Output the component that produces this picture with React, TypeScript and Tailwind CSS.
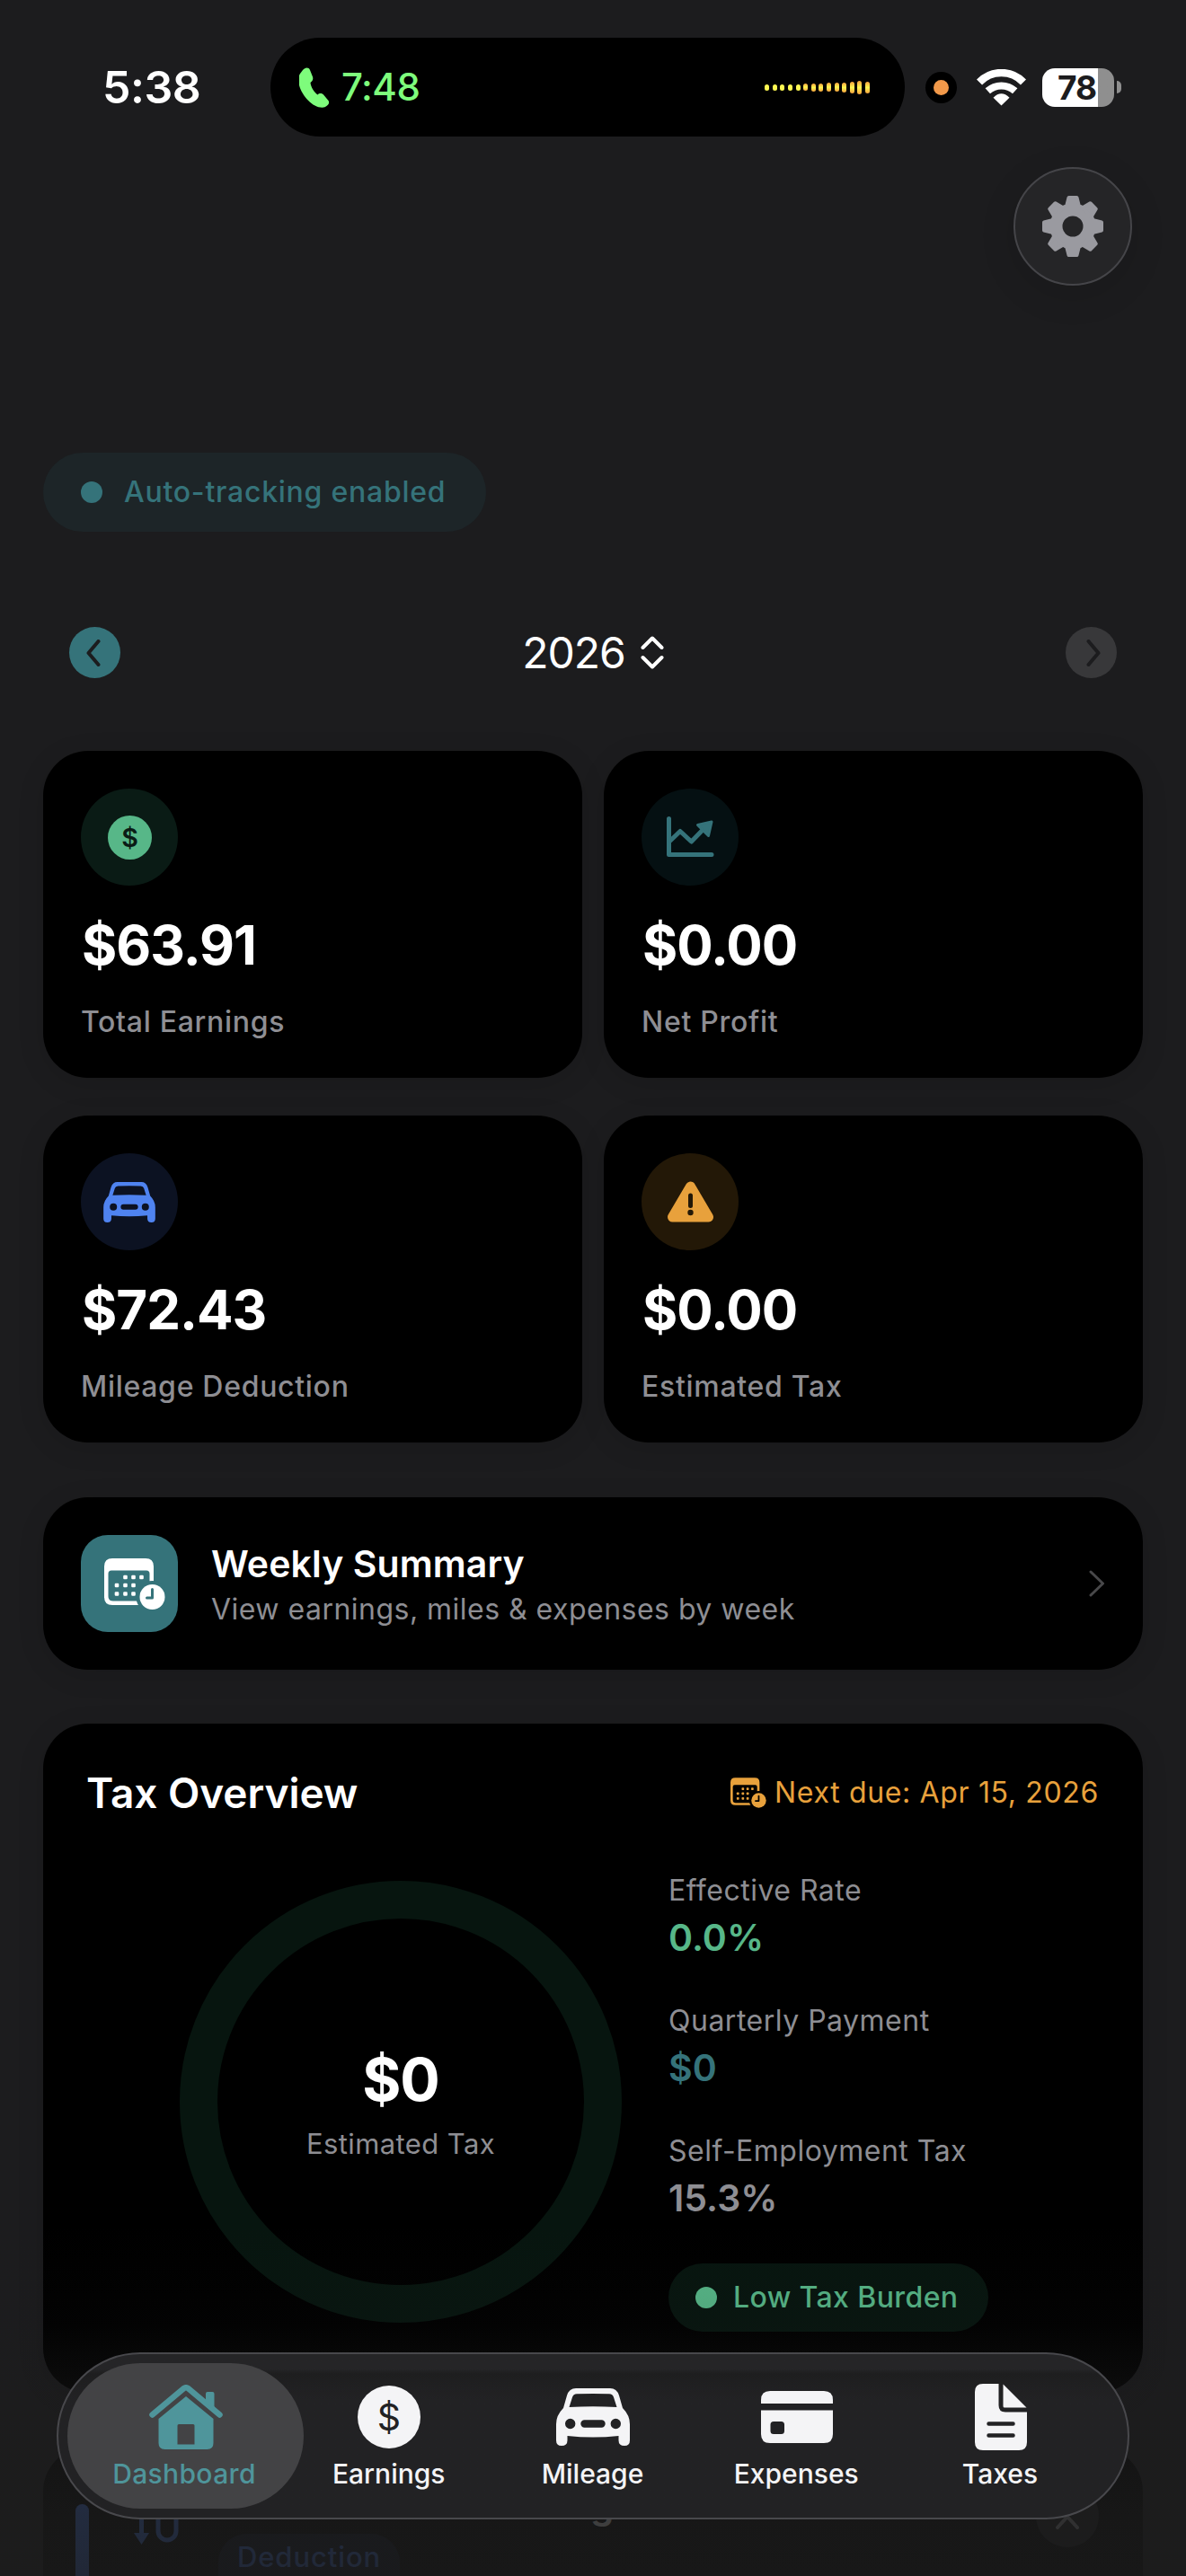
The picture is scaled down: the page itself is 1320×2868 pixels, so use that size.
import React from "react";

const stats = [
  { label: "Total Earnings", value: "$63.91", bg: "bg-[#0a1b15]", icon: <CoinIcon size={49} fill="#57b788" ink="#0a1b15" weight={600} /> },
  { label: "Net Profit", value: "$0.00", bg: "bg-[#051012]", icon: <ChartIcon /> },
  { label: "Mileage Deduction", value: "$72.43", bg: "bg-[#0c1222]", icon: <CarIcon width={58} height={45} fill="#4f83f0" /> },
  { label: "Estimated Tax", value: "$0.00", bg: "bg-[#231807]", icon: <WarningIcon /> },
];

const rates = [
  { label: "Effective Rate", value: "0.0%", color: "text-[#57b788]" },
  { label: "Quarterly Payment", value: "$0", color: "text-[#35737a]" },
  { label: "Self-Employment Tax", value: "15.3%", color: "text-[#8e8e93]" },
];

const tabs = [
  { label: "Dashboard", icon: <HouseIcon />, active: true },
  { label: "Earnings", icon: <CoinIcon size={70} fill="#f4f4f6" ink="#222224" weight={400} /> },
  { label: "Mileage", icon: <CarIcon width={82} height={64} fill="#f4f4f6" /> },
  { label: "Expenses", icon: <CreditCardIcon /> },
  { label: "Taxes", icon: <DocIcon /> },
];

const waveform = [7, 7, 7, 7, 7, 8, 9, 9, 10, 10, 11, 13, 15, 13];

function CoinIcon({ size, fill, ink, weight }: { size: number; fill: string; ink: string; weight: number }) {
  return (
    <svg width={size} height={size} viewBox="0 0 70 70">
      <circle cx="35" cy="35" r="35" fill={fill} />
      <text x="35" y="50" textAnchor="middle" fontFamily="Inter" fontSize="41" fontWeight={weight} fill={ink}>$</text>
    </svg>
  );
}

function ChartIcon() {
  return (
    <svg width="53" height="46" viewBox="0 0 53 46" fill="none" stroke="#35737a" strokeWidth="5" strokeLinecap="round" strokeLinejoin="round">
      <path d="M2.5 2.5V42.5H50" />
      <path d="M4 27L15 16.5L27.500 28L42 13" />
      <path d="M34.500 9.500L50 6L46.500 21.500Z" fill="#35737a" strokeWidth="3" />
    </svg>
  );
}

function CarIcon({ width, height, fill }: { width: number; height: number; fill: string }) {
  return (
    <svg width={width} height={height} viewBox="0 0 82 64" fill={fill}>
      <path
        fillRule="evenodd"
        d="M8 22L12 8Q14.500 0 22 0Q41 -1 60 0Q67.500 0 70 8L74 22Q82 30 82 40V58Q82 64 76 64Q69.500 64 69.500 58V53Q55 54.500 41 54.500Q27 54.500 12.500 53V58Q12.500 64 6 64Q0 64 0 58V40Q0 30 8 22ZM14.500 21Q41 19.500 67.500 21L64 10Q63 6.500 59 6.300Q41 5.600 23 6.300Q19 6.500 18 10ZM10 39.500A5.700 5.700 0 1 0 21.400 39.500A5.700 5.700 0 1 0 10 39.500ZM60.600 39.500A5.700 5.700 0 1 0 72 39.500A5.700 5.700 0 1 0 60.600 39.500ZM31.500 35.300A4.200 4.200 0 0 0 31.500 43.700H50.500A4.200 4.200 0 0 0 50.500 35.300Z"
      />
    </svg>
  );
}

function WarningIcon() {
  return (
    <svg width="51" height="46" viewBox="0 0 51 46">
      <path d="M25.500 6L45.500 40H5.500Z" fill="#e8a13c" stroke="#e8a13c" strokeWidth="11" strokeLinejoin="round" />
      <path d="M25.500 16V27.500" stroke="#231807" strokeWidth="5" strokeLinecap="round" />
      <circle cx="25.500" cy="35" r="3.200" fill="#231807" />
    </svg>
  );
}

function CalendarClockIcon({ width, height, fill, back }: { width: number; height: number; fill: string; back: string }) {
  const dots = [
    [23.500, 21], [32.500, 21], [41.500, 21],
    [14, 30], [23.500, 30], [32.500, 30],
    [14, 39.500], [23.500, 39.500], [32.500, 39.500],
  ];
  return (
    <svg width={width} height={height} viewBox="0 0 68 57" fill={fill}>
      <path fillRule="evenodd" d="M9 0H46Q55 0 55 9V43Q55 52 46 52H9Q0 52 0 43V9Q0 0 9 0ZM4.500 17V42Q4.500 47.500 10 47.500H45Q50.500 47.500 50.500 42V17Q50.500 13.500 47 13.500H8Q4.500 13.500 4.500 17Z" />
      {dots.map(([x, y], i) => (
        <rect key={i} x={x - 2.300} y={y - 2.300} width="4.600" height="4.600" rx="1.200" />
      ))}
      <circle cx="53.500" cy="43" r="18" fill={back} />
      <circle cx="53.500" cy="43" r="14" />
      <path d="M53.500 34.500V44H47.500" fill="none" stroke={back} strokeWidth="3" strokeLinecap="round" strokeLinejoin="round" />
    </svg>
  );
}

function HouseIcon() {
  return (
    <svg width="82" height="72" viewBox="0 0 82 72" fill="#4f959b">
      <path d="M3.500 33.500L38.700 4Q41 2.500 43.300 4L78.500 33.500" fill="none" stroke="#4f959b" strokeWidth="6.500" strokeLinecap="round" strokeLinejoin="round" />
      <path d="M63 10Q63 8 65 8H70.500Q72.500 8 72.500 10V28L63 20Z" />
      <path fillRule="evenodd" d="M41 13L71.500 38V65Q71.500 72 64.500 72H17.500Q10.500 72 10.500 65V38ZM33 44Q31.500 44 31.500 45.500V66.500H50.500V45.500Q50.500 44 49 44Z" />
    </svg>
  );
}

function CreditCardIcon() {
  return (
    <svg width="80" height="58" viewBox="0 0 80 58" fill="#f4f4f6">
      <path d="M0 14V10Q0 0 10 0H70Q80 0 80 10V14Z" />
      <path fillRule="evenodd" d="M0 21.500H80V48Q80 58 70 58H10Q0 58 0 48ZM14 34Q10.500 34 10.500 37.500V44.500Q10.500 48 14 48H22.500Q26 48 26 44.500V37.500Q26 34 22.500 34Z" />
    </svg>
  );
}

function DocIcon() {
  return (
    <svg width="58" height="74" viewBox="0 0 58 74">
      <path d="M9 0H26.500V24Q26.500 31.500 34 31.500H58V65Q58 74 49 74H9Q0 74 0 65V9Q0 0 9 0Z" fill="#f4f4f6" />
      <path d="M31.500 0.500L57.500 26.500H33Q31.500 26.500 31.500 25Z" fill="#f4f4f6" />
      <path d="M15.500 44.500H42.500M15.500 57.500H42.500" stroke="#222224" strokeWidth="4.500" strokeLinecap="round" />
    </svg>
  );
}

function GearIcon() {
  return (
    <svg width="68" height="68" viewBox="-34 -34 68 68">
      <circle r="18.500" fill="none" stroke="#9a9aa0" strokeWidth="14" />
      {[0, 45, 90, 135, 180, 225, 270, 315].map((a) => (
        <path key={a} transform={`rotate(${a})`} d="M-4.500 -32H4.500L7 -22H-7Z" fill="#9a9aa0" stroke="#9a9aa0" strokeWidth="4" strokeLinejoin="round" />
      ))}
    </svg>
  );
}

function StatusBar() {
  return (
    <div className="flex h-[110px] items-center">
      <div className="w-[301px] pl-[114px] text-[50px] font-semibold leading-none tracking-[-0.5px]">5:38</div>
      <div className="flex h-[110px] w-[706px] items-center rounded-full bg-black pl-[32px] pr-[39px]">
        <svg width="34" height="45" viewBox="0 0 34 45" fill="#7efc7c">
          <path d="M4 3C6.500 0 10.500 -0.500 12 3L15 10.500C16 13.500 14.500 15.500 12.500 17C13 22 16.500 27.500 20.500 30.500C22.500 28.500 25.500 28.500 27.500 31L32.500 37C34.500 40 31.500 43 28.500 44.300C13 48 -7 20 1 7Z" />
        </svg>
        <span className="ml-[13px] text-[42px] font-medium leading-none tracking-[-0.5px] text-[#7efc7c]">7:48</span>
        <div className="ml-auto flex items-center gap-[3.600px]">
          {waveform.map((h, i) => (
            <div
              key={i}
              className={`w-[5px] rounded-full ${i < 5 ? "bg-[#fdf752]" : "bg-linear-to-b from-[#f3a13c] via-[#fdf752] to-[#f3a13c]"}`}
              style={{ height: h }}
            />
          ))}
        </div>
      </div>
      <div className="ml-[23px] flex size-[35px] items-center justify-center rounded-full bg-black">
        <div className="size-[17px] rounded-full bg-[#f2994a]" />
      </div>
      <svg className="ml-[22px] shrink-0" width="55" height="41" viewBox="0 0 55 41" fill="none" stroke="#fff">
        <path d="M3 14.500A34 34 0 0 1 52 14.500" strokeWidth="8.500" />
        <path d="M12.300 24.300A22.500 22.500 0 0 1 42.700 24.300" strokeWidth="8" />
        <path d="M27.500 40.500L18.500 31.700Q27.500 22.800 36.500 31.700Z" fill="#fff" stroke="none" />
      </svg>
      <div className="ml-[18px] flex h-[43px] w-[80px] items-center justify-center rounded-[14px] bg-linear-to-r from-white from-[77%] to-[#8f8f8f] to-[77%] text-[37px] font-bold leading-none tracking-[-1px] text-[#1c1c1e]">
        <span className="mr-[3px]">78</span>
      </div>
      <div className="ml-[3px] h-[14px] w-[5px] rounded-r-full bg-[#8f8f8f]" />
    </div>
  );
}

function StatCard({ label, value, bg, icon }: { label: string; value: string; bg: string; icon: React.ReactNode }) {
  return (
    <div className="h-[364px] rounded-[50px] bg-black pl-[42px] pt-[42px] shadow-[0_6px_30px_rgba(0,0,0,0.12)]">
      <div className={`flex size-[108px] items-center justify-center rounded-full ${bg}`}>{icon}</div>
      <div className="ml-px mt-[30px] text-[60px] font-bold leading-[72px] tracking-[-1px]">{value}</div>
      <div className="mt-[29px] text-[32px] font-medium leading-[42px] tracking-[0.700px] text-[#8e8e93]">{label}</div>
    </div>
  );
}

function TaxOverview() {
  return (
    <div className="mt-[60px] h-[745px] shrink-0 rounded-[50px] bg-black pt-[47px] shadow-[0_6px_30px_rgba(0,0,0,0.12)]">
      <div className="flex h-[60px] items-center justify-between pl-[48px] pr-[49px]">
        <h2 className="text-[46px] font-semibold tracking-[-0.050px]">Tax Overview</h2>
        <div className="flex items-center gap-[9px] text-[32px] tracking-[0.650px] text-[#e8a13c]">
          <CalendarClockIcon width={40} height={34} fill="#e8a13c" back="#000" />
          <span>Next due: Apr 15, 2026</span>
        </div>
      </div>
      <div className="mt-[58px] flex items-start pl-[152px]">
        <div className="mt-[10px] flex size-[492px] flex-col items-center rounded-full border-[42px] border-[#07150f] pt-[139px]">
          <div className="text-[66px] font-bold leading-[80px] tracking-[-1px]">$0</div>
          <div className="mt-[12px] text-[31px] leading-[40px] tracking-[0.400px] text-[#8e8e93]">Estimated Tax</div>
        </div>
        <div className="ml-[52px] flex flex-col items-start pt-px">
          {rates.map((r) => (
            <div key={r.label} className="mb-[48.500px]">
              <div className="text-[32px] leading-[40px] tracking-[0.500px] text-[#8e8e93]">{r.label}</div>
              <div className={`mt-[6.500px] text-[41px] font-semibold leading-[50px] ${r.color}`}>{r.value}</div>
            </div>
          ))}
          <div className="flex h-[76px] w-[356px] items-center rounded-full bg-[#07150f] pl-[30px]">
            <div className="size-[24px] rounded-full bg-[#57b788]" />
            <span className="ml-[18px] text-[32px] font-medium tracking-[0.400px] text-[#57b788]">Low Tax Burden</span>
          </div>
        </div>
      </div>
    </div>
  );
}

// next card in the scroll view, mostly under the tab bar
function TripCard() {
  return (
    <div className="mt-[60px] h-[220px] shrink-0 rounded-[50px] bg-black pt-[64px]">
      <div className="flex items-start">
        <div className="ml-[36px] h-[160px] w-[15px] rounded-full bg-[#3f6fd8]" />
        <svg className="ml-[50px]" width="52" height="46" viewBox="0 0 52 46" fill="none" stroke="#3f6fd8" strokeWidth="5">
          <path d="M8.500 0V34M27 0V30A10 10 0 0 0 47 30V0" />
          <path d="M0 32H17L8.500 45Z" fill="#3f6fd8" stroke="none" />
        </svg>
        <div className="ml-[42px] mt-[33px] h-[80px] w-[202px] rounded-[32px] bg-[#0c1222] pt-[8px] text-center text-[31px] font-medium leading-[36px] tracking-[0.900px] text-[#3f6fd8]">Deduction</div>
        <div className="ml-[212px] -mt-[24px] text-[42px] font-semibold leading-[50px] text-[#e0e0e0]">g</div>
        <div className="ml-auto mr-[49px] -mt-[22px] flex size-[70px] items-center justify-center rounded-full bg-[#1c1c1e]">
          <svg width="26" height="16" viewBox="0 0 26 16" fill="none" stroke="#8e8e93" strokeWidth="4" strokeLinecap="round" strokeLinejoin="round" className="mt-[14px]">
            <path d="M2 14L13 2L24 14" />
          </svg>
        </div>
      </div>
    </div>
  );
}

function TabBar() {
  return (
    <nav className="absolute left-[63px] top-[2619px] flex h-[186px] w-[1194px] rounded-full border-2 border-[#48484c] bg-linear-to-b from-[#252527] from-[9%] via-[#1e1e1f] via-[12%] to-[#222224] to-[28%] px-[10px] py-[10px]">
      {tabs.map((t, i) => (
        <div
          key={t.label}
          className={`flex h-[162px] w-[263px] shrink-0 flex-col items-center rounded-full ${i > 0 ? "-ml-[36.250px]" : ""} ${t.active ? "bg-[#434345] text-[#4f959b]" : "text-[#f4f4f6]"}`}
        >
          <div className="mt-[20px] flex h-[80px] items-center">{t.icon}</div>
          <div className={`mt-[3px] text-[30px] font-medium leading-[40px] ${t.active ? "mr-[3px] tracking-[0.350px]" : "mr-px"}`}>{t.label}</div>
        </div>
      ))}
    </nav>
  );
}

export default function App() {
  return (
    <div className="relative flex h-[2868px] w-[1320px] flex-col overflow-hidden bg-[#1c1c1e] pt-[42px] font-['Inter',sans-serif] text-white">
      <StatusBar />
      <div className="mt-[34px] flex justify-end pr-[60px]">
        <button className="flex size-[132px] items-center justify-center rounded-full border-2 border-[#454549] bg-[#252527] shadow-[0_10px_40px_rgba(0,0,0,0.12)]">
          <GearIcon />
        </button>
      </div>

      <div className="flex flex-col px-[48px]">
        <div className="mt-[186px] flex h-[88px] w-[493px] items-center rounded-full bg-[#1d2528] pl-[42px]">
          <div className="size-[24px] rounded-full bg-[#35737a]" />
          <span className="ml-[24px] text-[32px] font-medium tracking-[0.750px] text-[#35737a]">Auto-tracking enabled</span>
        </div>

        <div className="mt-[106px] flex h-[57px] items-center justify-between px-[29px]">
          <button className="flex size-[57px] items-center justify-center rounded-full bg-[#35737a]">
            <svg width="16" height="30" viewBox="0 0 16 30" fill="none" stroke="#1c1c1e" strokeWidth="4" strokeLinecap="round" strokeLinejoin="round" className="mr-[4px]">
              <path d="M13.500 2L2.500 15L13.500 28" />
            </svg>
          </button>
          <div className="flex items-center gap-[17px] text-[48px] leading-none tracking-[-1px]">
            2026
            <svg width="26" height="37" viewBox="0 0 26 37" fill="none" stroke="#fff" strokeWidth="4" strokeLinecap="round" strokeLinejoin="round">
              <path d="M2.500 13L13 2.500L23.500 13M2.500 24L13 34.500L23.500 24" />
            </svg>
          </div>
          <button className="flex size-[57px] items-center justify-center rounded-full bg-[#38383a]">
            <svg width="16" height="30" viewBox="0 0 16 30" fill="none" stroke="#1c1c1e" strokeWidth="4" strokeLinecap="round" strokeLinejoin="round" className="ml-[4px]">
              <path d="M2.500 2L13.500 15L2.500 28" />
            </svg>
          </button>
        </div>

        <div className="mt-[81px] grid grid-cols-2 gap-x-[24px] gap-y-[42px]">
          {stats.map((s) => (
            <StatCard key={s.label} {...s} />
          ))}
        </div>

        <div className="mt-[61px] flex h-[192px] items-center rounded-[50px] bg-black px-[42px] shadow-[0_6px_30px_rgba(0,0,0,0.12)]">
          <div className="flex size-[108px] items-center justify-center rounded-[30px] bg-[#35737a] pl-[12px]">
            <CalendarClockIcon width={68} height={57} fill="#fff" back="#35737a" />
          </div>
          <div className="ml-[37px] mt-[6px]">
            <div className="text-[41px] font-semibold leading-[50px] tracking-[0.100px]">Weekly Summary</div>
            <div className="mt-px text-[32px] leading-[50px] tracking-[0.480px] text-[#8e8e93]">View earnings, miles &amp; expenses by week</div>
          </div>
          <svg className="ml-auto" width="18" height="30" viewBox="0 0 18 30" fill="none" stroke="#48484a" strokeWidth="3" strokeLinecap="round" strokeLinejoin="round">
            <path d="M2 2L15.500 15L2 28" />
          </svg>
        </div>

        <TaxOverview />
        <TripCard />
      </div>

      <div className="absolute inset-x-0 bottom-0 h-[388px] bg-[linear-gradient(to_bottom,transparent_0%,rgba(28,28,28,0.1)_28%,rgba(28,28,28,0.25)_36%,rgba(28,28,28,0.43)_47%,rgba(28,28,28,0.72)_65%,rgba(28,28,28,0.82)_82%,rgba(28,28,28,0.86)_100%)]" />
      <TabBar />
    </div>
  );
}
